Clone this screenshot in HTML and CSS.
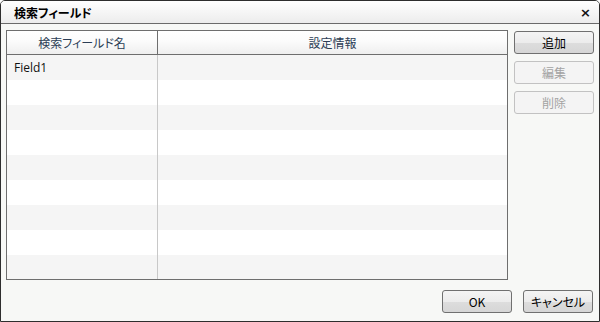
FILE: index.html
```html
<!DOCTYPE html>
<html lang="ja">
<head>
<meta charset="utf-8">
<link rel="stylesheet" href="styles.css">
</head>
<body>
<div class="win">
  <div class="titlebar">
    <span class="title">検索フィールド</span>
    <span class="close">×</span>
  </div>
  <div class="content">
    <div class="main">
      <div class="grid">
        <div class="hrow">
          <div class="c1 hcell">検索フィールド名</div>
          <div class="c2 hcell">設定情報</div>
        </div>
        <div class="rows">
          <div class="row alt"><div class="c1 cell">Field1</div><div class="c2 cell"></div></div>
          <div class="row"><div class="c1 cell"></div><div class="c2 cell"></div></div>
          <div class="row alt"><div class="c1 cell"></div><div class="c2 cell"></div></div>
          <div class="row"><div class="c1 cell"></div><div class="c2 cell"></div></div>
          <div class="row alt"><div class="c1 cell"></div><div class="c2 cell"></div></div>
          <div class="row"><div class="c1 cell"></div><div class="c2 cell"></div></div>
          <div class="row alt"><div class="c1 cell"></div><div class="c2 cell"></div></div>
          <div class="row"><div class="c1 cell"></div><div class="c2 cell"></div></div>
          <div class="row alt"><div class="c1 cell"></div><div class="c2 cell"></div></div>
        </div>
      </div>
      <div class="side">
        <button class="btn">追加</button>
        <button class="btn" disabled>編集</button>
        <button class="btn" disabled>削除</button>
      </div>
    </div>
    <div class="footer">
      <button class="btn small">OK</button>
      <button class="btn small">キャンセル</button>
    </div>
  </div>
</div>
</body>
</html>
```
FILE: styles.css
```css
* { box-sizing: border-box; }
html, body { margin: 0; padding: 0; }
body {
  width: 600px;
  height: 322px;
  overflow: hidden;
  font-family: "Noto Sans CJK JP", "Noto Sans", sans-serif;
  font-size: 12px;
  color: #000;
  font-feature-settings: "palt";
}
.win {
  width: 600px;
  height: 322px;
  border: 1px solid #2e2e2e;
  border-radius: 5px 5px 0 0;
  background: #f7f8f6;
  display: flex;
  flex-direction: column;
  overflow: hidden;
}
.titlebar {
  height: 23px;
  flex: none;
  border-bottom: 1px solid #6a6a6a;
  background: linear-gradient(#ffffff, #ececec);
  display: flex;
  align-items: center;
  justify-content: space-between;
  padding: 0 8px 0 13px;
}
.title {
  font-weight: bold;
  font-size: 12px;
  line-height: 14px;
  padding-top: 1px;
}
.close {
  font-family: "DejaVu Sans", sans-serif;
  font-weight: bold;
  font-size: 13px;
  line-height: 13px;
  color: #111;
}
.content {
  flex: 1;
  display: flex;
  flex-direction: column;
  padding: 6px 5px 8px 5px;
}
.main {
  display: flex;
  gap: 6px;
}
.grid {
  width: 502px;
  height: 250px;
  border: 1px solid #6e6e6e;
  background: #fff;
  overflow: hidden;
}
.hrow {
  display: flex;
  height: 24px;
  border-bottom: 1px solid #6e6e6e;
  background: linear-gradient(#ffffff 0%, #fbfbfb 45%, #efefef 100%);
}
.hcell {
  display: flex;
  align-items: center;
  justify-content: center;
  color: #2b3d55;
  line-height: 14px;
}
.hrow .c1 { border-right: 1px solid #6e6e6e; }
.c1 { width: 151px; flex: none; }
.c2 { flex: 1; }
.row {
  display: flex;
  height: 25px;
  background: #fff;
}
.row.alt { background: #f5f5f5; }
.row .c1 { border-right: 1px solid #c8c8c8; }
.cell {
  display: flex;
  align-items: center;
  padding-left: 7px;
  padding-bottom: 1px;
  color: #111;
  font-family: "Open Sans", "Noto Sans", sans-serif;
  font-size: 12px;
}
.side {
  display: flex;
  flex-direction: column;
  gap: 7px;
  padding-top: 1px;
}
.btn {
  width: 80px;
  height: 23px;
  margin: 0;
  padding: 0;
  border: 1px solid #707070;
  border-radius: 3px;
  background: linear-gradient(#f4f4f4 0%, #ececec 50%, #dddddd 51%, #d6d6d6 100%);
  font-family: "Noto Sans CJK JP", "Noto Sans", sans-serif;
  font-feature-settings: "palt";
  font-size: 12px;
  color: #000;
  line-height: 14px;
}
.btn:disabled {
  border-color: #c2c2c2;
  background: #f4f4f4;
  color: #a3a3a3;
}
.footer {
  margin-top: auto;
  display: flex;
  justify-content: flex-end;
  gap: 11px;
  padding-right: 1px;
}
.btn.small { width: 70px; }
```
